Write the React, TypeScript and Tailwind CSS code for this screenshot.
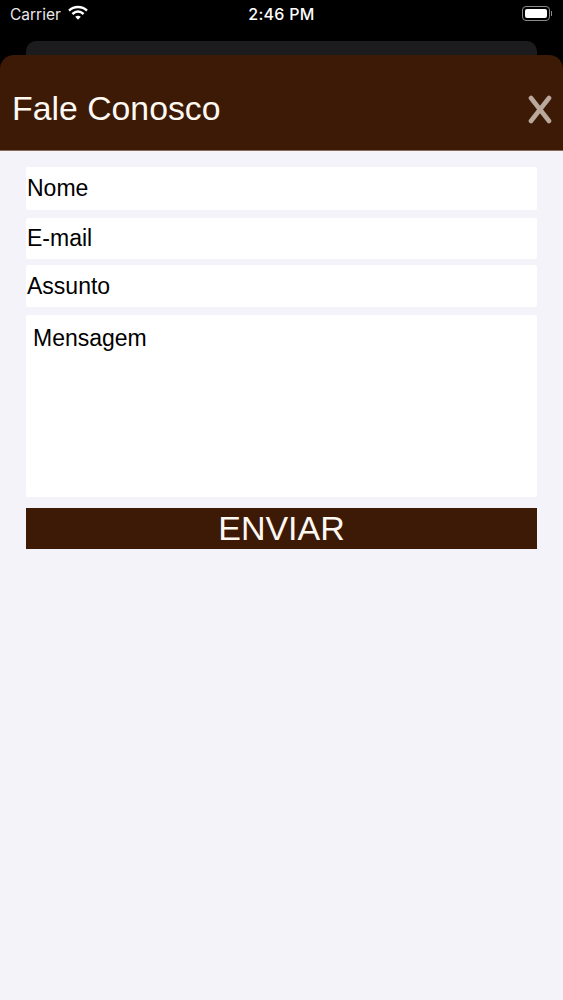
export default function App() {
  return (
    <div className="w-[563px] h-[1000px] bg-black overflow-hidden flex flex-col font-['Liberation_Sans',sans-serif]">
      <div className="h-[41px] relative flex items-start text-white font-['Inter',sans-serif]">
        <div className="flex items-center pl-[10px] pt-[5px] gap-[7px] h-[24px] text-[15.5px] text-[#e8e8e8]">
          <span>Carrier</span>
          <svg width="20" height="16" viewBox="0 0 20 16" className="-mt-[3px]">
            <path d="M1 5.6C6 0.8 14 0.8 19 5.6" stroke="#fff" strokeWidth="2.4" fill="none" />
            <path d="M4.4 9C8 5.7 12 5.7 15.6 9" stroke="#fff" strokeWidth="2.4" fill="none" />
            <path d="M7.2 11.8L10 14.8L12.8 11.8C11 10.3 9 10.3 7.2 11.8Z" fill="#fff" />
          </svg>
        </div>
        <div className="absolute left-0 right-0 top-[5px] text-center text-[16px] font-medium leading-[19px] tracking-[0.3px]">2:46 PM</div>
        <div className="absolute left-[522px] top-[6px] w-[28px] h-[15px] rounded-[4px] border border-[#8a8a8a] p-[2px]">
          <div className="w-full h-full bg-white rounded-[2px]" />
        </div>
        <div className="absolute left-[551px] top-[11px] w-[1px] h-[5px] bg-[#8a8a8a]" />
      </div>
      <div className="h-[14px] mx-[26px] bg-[#1c1c1e] rounded-t-[10px] shrink-0" />
      <div className="h-[96px] shrink-0 bg-[#3c1a05] rounded-t-[14px] flex items-center justify-between pl-[12px] pr-[11px] pt-[13px] border-b border-[#8a6a5a]">
        <span className="text-[33.8px] text-[#fdf8f2] leading-none">Fale Conosco</span>
        <svg width="24" height="29" viewBox="0 0 24 29">
          <path d="M3 3L21 26M21 3L3 26" stroke="#b9a89b" strokeWidth="4.6" strokeLinecap="round" />
        </svg>
      </div>
      <div className="flex-1 bg-[#f4f3fa] px-[26px] pt-[16px] flex flex-col">
        <div className="h-[43px] bg-white rounded-[2px] flex items-center pl-px text-[23px] text-black">Nome</div>
        <div className="h-[41px] mt-[8px] bg-white rounded-[2px] flex items-center pl-px text-[23px] text-black">E-mail</div>
        <div className="h-[42px] mt-[6px] bg-white rounded-[2px] flex items-center pl-px text-[23px] text-black">Assunto</div>
        <div className="h-[182px] mt-[8px] bg-white rounded-[2px] pl-[7px] pt-[9px] text-[23px] leading-[28px] text-black">Mensagem</div>
        <div className="h-[41px] mt-[11px] bg-[#3c1a05] flex items-center justify-center text-[34px] text-[#fdf8f2]">ENVIAR</div>
      </div>
    </div>
  );
}
